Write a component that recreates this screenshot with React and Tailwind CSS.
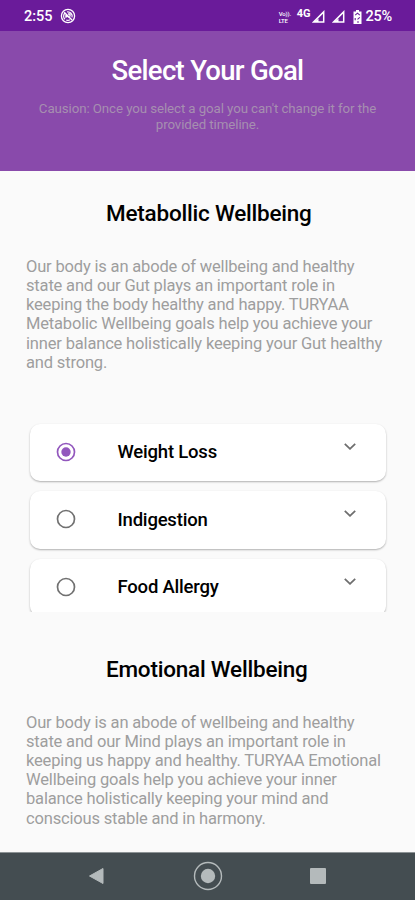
import { useState } from "react";

const sections = [
  {
    title: "Metabollic Wellbeing",
    lines: [
      "Our body is an abode of wellbeing and healthy",
      "state and our Gut plays an important role in",
      "keeping the body healthy and happy. TURYAA",
      "Metabolic Wellbeing goals help you achieve your",
      "inner balance holistically keeping your Gut healthy",
      "and strong.",
    ],
    goals: ["Weight Loss", "Indigestion", "Food Allergy"],
  },
  {
    title: "Emotional Wellbeing",
    lines: [
      "Our body is an abode of wellbeing and healthy",
      "state and our Mind plays an important role in",
      "keeping us happy and healthy. TURYAA Emotional",
      "Wellbeing goals help you achieve your inner",
      "balance holistically keeping your mind and",
      "conscious stable and in harmony.",
    ],
    goals: [],
  },
];

function SignalIcon() {
  return (
    <svg className="w-[13px] h-[13px]" viewBox="0 0 13 13" fill="none" stroke="#fff" strokeWidth="1.5">
      <path d="M11.7 1.9V12H1.6Z" />
      <path d="M6.5 8.5V12H2Z" fill="#fff" stroke="none" />
    </svg>
  );
}

function StatusBar() {
  return (
    <div className="flex h-[31px] items-center bg-[#6a1b9a] pl-6 pr-[23px] pt-[2px] text-white">
      <span className="text-[14.5px] font-medium">2:55</span>
      <svg className="ml-[7px] mb-px w-4 h-4" viewBox="0 0 16 16" fill="none" stroke="#fff">
        <circle cx="8" cy="8" r="6.6" strokeWidth="1.3" />
        <path d="M5 11.3A4.3 4.3 0 0 1 5 5M7 4A4.3 4.3 0 0 1 12 9.3M6.2 12A4.3 4.3 0 0 0 10 11.7" strokeWidth="1.2" />
        <path d="M4.2 4.2L12 12M6 9.8V7.2L9.8 10M8 6H10V8.6" strokeWidth="1.4" />
      </svg>

      <div className="ml-auto flex items-center">
        <div className="flex w-[14px] flex-col text-[6px] font-medium leading-[7px] tracking-[-0.1px]">
          <span>Vo)).</span>
          <span>LTE</span>
        </div>
        <span className="ml-[4px] mb-[5px] text-[11px] font-bold leading-[10px]">4G</span>
        <span className="ml-[2px]"><SignalIcon /></span>
        <span className="ml-[7px]"><SignalIcon /></span>
        <svg className="ml-[8px] h-[14px] w-[9px]" viewBox="0 0 9 14">
          <path d="M3 0H6V1.5H8.5V14H0.5V1.5H3Z" fill="#fff" />
          <path d="M2.2 5.2L4.5 3.2L6.8 5.2M2.2 8V10.2M6.8 7.3L4.5 9.4M4 12H6" fill="none" stroke="#6a1b9a" strokeWidth="1.1" />
        </svg>
        <span className="ml-[3px] text-[14.5px] font-medium tracking-[-0.2px]">25%</span>
      </div>
    </div>
  );
}

function Radio({ checked }) {
  return (
    <svg
      className={checked ? "w-5 h-5 text-[#9257bd]" : "w-5 h-5 text-[#717171]"}
      viewBox="0 0 20 20"
      fill="none"
      stroke="currentColor"
    >
      <circle cx="10" cy="10" r="8.5" strokeWidth="1.7" />
      {checked && <circle cx="10" cy="10" r="4.7" fill="currentColor" stroke="none" />}
    </svg>
  );
}

function GoalCard({ label, checked, onSelect }) {
  return (
    <button
      onClick={onSelect}
      className="flex h-[57.5px] w-full shrink-0 items-center rounded-[10px] bg-white pb-px pl-[26px] pr-[30px] text-left shadow-[0_1px_2px_rgba(0,0,0,0.3)]"
    >
      <Radio checked={checked} />
      <span className="ml-[42px] pt-[2px] text-[18.5px] font-medium tracking-[-0.2px] text-black">{label}</span>
      <svg
        className="mb-[11px] ml-auto h-[7px] w-3"
        viewBox="0 0 12 7"
        fill="none"
        stroke="#6e6e6e"
        strokeWidth="1.8"
      >
        <path d="M0.8 0.8L6 5.8L11.2 0.8" />
      </svg>
    </button>
  );
}

export default function App() {
  const [selected, setSelected] = useState("Weight Loss");

  return (
    <div className="flex h-[900px] w-[415px] flex-col overflow-hidden bg-[#fafafa] font-['Roboto',sans-serif]">
      <StatusBar />

      {/* HEADER */}
      <header className="h-[140px] bg-[#894aab] pt-[24px] text-center">
        <h1 className="text-[27.5px] font-medium leading-[32px] tracking-[-0.7px] text-white">Select Your Goal</h1>
        <p className="mt-[14px] whitespace-nowrap text-[13.3px] leading-[15.5px] tracking-[-0.09px] text-[#a68fb0]">
          Causion: Once you select a goal you can't change it for the
          <br />
          provided timeline.
        </p>
      </header>

      {/* GOAL SECTIONS */}
      <main className="flex flex-1 flex-col gap-[15px] overflow-hidden">
        {sections.map((section) => (
          <section key={section.title} className="pt-[28px]">
            <h2 className="pl-[106px] text-[22.5px] font-medium leading-[29px] tracking-[-0.22px] text-black">
              {section.title}
            </h2>
            <p className="mt-[28.8px] whitespace-nowrap pl-[26px] text-[16.5px] leading-[19.2px] tracking-[-0.17px] text-[#9e9e9e]">
              {section.lines.map((line) => (
                <span key={line} className="block">{line}</span>
              ))}
            </p>

            {section.goals.length > 0 && (
              <div className="mt-[48.7px] flex h-[191px] flex-col gap-[10px] overflow-hidden px-[29.5px] pt-[3px]">
                {section.goals.map((goal) => (
                  <GoalCard
                    key={goal}
                    label={goal}
                    checked={selected === goal}
                    onSelect={() => setSelected(goal)}
                  />
                ))}
              </div>
            )}
          </section>
        ))}
      </main>

      {/* NAVIGATION BAR */}
      <nav className="grid h-[48px] grid-cols-[193px_30px_1fr] items-center border-t border-[#8d9395] bg-[#444d51] pb-px">
        <svg className="ml-[88px] h-[18px] w-4" viewBox="0 0 16 18">
          <path d="M1.5 9L15 1.5V16.5Z" fill="#b4babb" stroke="#b4babb" strokeLinejoin="round" />
        </svg>
        <svg className="h-[30px] w-[30px]" viewBox="0 0 30 30">
          <circle cx="15" cy="15" r="13.5" fill="none" stroke="#b4babb" strokeWidth="1.4" />
          <circle cx="15" cy="15" r="7.2" fill="#b4babb" />
        </svg>
        <span className="ml-[87px] h-4 w-4 rounded-[1px] bg-[#b4babb]" />
      </nav>
    </div>
  );
}
